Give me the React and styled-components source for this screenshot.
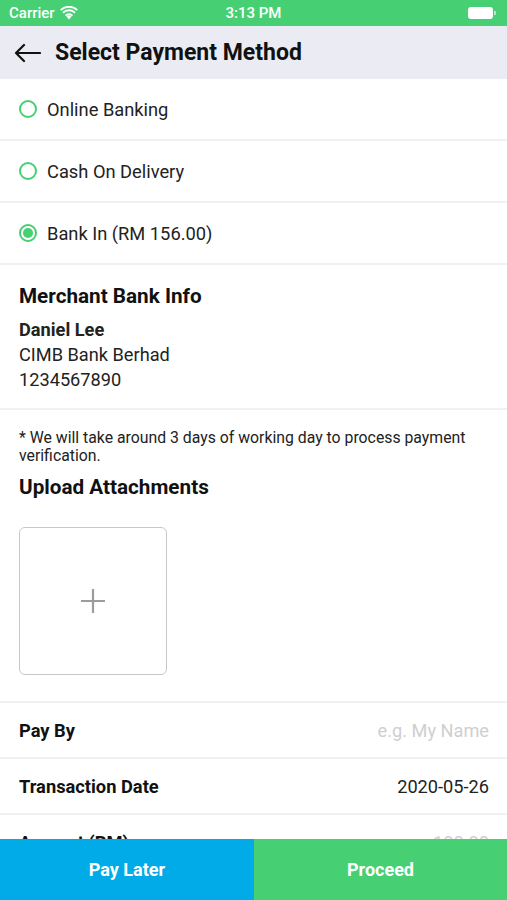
import React, { useState } from 'react'
import styled, { createGlobalStyle } from 'styled-components'

const GlobalStyle = createGlobalStyle`
  html, body {
    margin: 0;
    padding: 0;
    background: #fff;
    font-family: Roboto, "Liberation Sans", Arial, sans-serif;
  }
  * { box-sizing: border-box; }
`

const Screen = styled.div`
  height: 100vh;
  display: flex;
  flex-direction: column;
  overflow: hidden;
`

const StatusBar = styled.div`
  height: 26px;
  background: #47cf73;
  color: #fff;
  display: grid;
  grid-template-columns: 1fr auto 1fr;
  align-items: center;
  padding: 0 9px;
  font-size: 15px;
  font-weight: 500;
`

const Carrier = styled.div`
  display: flex;
  align-items: center;
  gap: 5px;
`

const Battery = styled.div`
  justify-self: end;
  display: flex;
  align-items: center;
  gap: 1px;
  margin-right: 2px;

  span {
    display: block;
    width: 25px;
    height: 12px;
    border-radius: 3px;
    background: #fff;
  }
  i {
    display: block;
    width: 2px;
    height: 4px;
    border-radius: 0 1px 1px 0;
    background: rgba(255, 255, 255, 0.6);
  }
`

const Header = styled.div`
  height: 53px;
  background: #ebecf3;
  display: flex;
  align-items: center;
  padding-left: 14px;
  gap: 14px;
`

const Title = styled.h1`
  margin: 0;
  font-size: 23px;
  font-weight: 700;
  color: #111;
`

const Scroll = styled.div`
  flex: 1;
  overflow: hidden;
`

const OptionRow = styled.div`
  height: 62px;
  display: flex;
  align-items: center;
  gap: 10px;
  padding-left: 19px;
  border-bottom: 2px solid #f1f1f1;
  font-size: 18.3px;
  color: #222;
  cursor: pointer;
`

const Radio = styled.span`
  width: 18px;
  height: 18px;
  border-radius: 50%;
  border: 2px solid #47cf73;
  display: flex;
  align-items: center;
  justify-content: center;

  &::after {
    content: '';
    width: 10px;
    height: 10px;
    border-radius: 50%;
    background: ${({ checked }) => (checked ? '#47cf73' : 'transparent')};
  }
`

const Section = styled.div`
  padding: ${({ pad }) => pad || '19px 19px 16px'};
  border-bottom: 2px solid #f1f1f1;
`

const SectionTitle = styled.h2`
  margin: 0 0 9px;
  font-size: 20.7px;
  line-height: 24px;
  font-weight: 700;
  color: #111;
`

const InfoLine = styled.div`
  font-size: 18.2px;
  line-height: 25px;
  color: #222;
  font-weight: ${({ bold }) => (bold ? 700 : 400)};
`

const Note = styled.p`
  margin: 0 0 10px;
  font-size: 15.8px;
  line-height: 18px;
  color: #222;
`

const UploadBox = styled.div`
  margin-top: 28px;
  width: 148px;
  height: 148px;
  border: 1.5px solid #c8c8c8;
  border-radius: 6px;
  display: flex;
  align-items: center;
  justify-content: center;
`

const FieldRow = styled.div`
  height: 56px;
  display: flex;
  align-items: center;
  justify-content: space-between;
  padding: 0 18px 0 19px;
  border-bottom: 2px solid #f1f1f1;
`

const FieldLabel = styled.span`
  font-size: 18.3px;
  font-weight: 700;
  color: #111;
`

const FieldValue = styled.span`
  font-size: 18.2px;
  color: ${({ placeholder }) => (placeholder ? '#cfcfcf' : '#222')};
`

const Footer = styled.div`
  height: 61px;
  display: grid;
  grid-template-columns: 254px 1fr;
`

const FooterButton = styled.button`
  border: none;
  margin: 0;
  background: ${({ primary }) => (primary ? '#47cf73' : '#00abe7')};
  color: #fff;
  font-family: inherit;
  font-size: 18px;
  font-weight: 700;
  cursor: pointer;
`

const options = ['Online Banking', 'Cash On Delivery', 'Bank In (RM 156.00)']

const fields = [
  { label: 'Pay By', value: 'e.g. My Name', placeholder: true },
  { label: 'Transaction Date', value: '2020-05-26' },
  { label: 'Amount (RM)', value: '100.00', placeholder: true },
]

const WifiIcon = () => (
  <svg width="18" height="14" viewBox="0 0 18 14" fill="#fff">
    <path d="M9 13.5l2.6-2.9a3.6 3.6 0 0 0-5.2 0z" />
    <path d="M4.9 8.9l1.3 1.4a4 4 0 0 1 5.6 0l1.3-1.4a5.9 5.9 0 0 0-8.2 0z" />
    <path d="M2.3 6.1l1.3 1.4a7.6 7.6 0 0 1 10.8 0l1.3-1.4a9.5 9.5 0 0 0-13.4 0z" />
    <path d="M0 3.4l1.3 1.4a11.1 11.1 0 0 1 15.4 0L18 3.4a13 13 0 0 0-18 0z" />
  </svg>
)

const BackArrow = () => (
  <svg width="27" height="20" viewBox="0 0 27 20" fill="none" stroke="#111" strokeWidth="2.2" strokeLinecap="round" strokeLinejoin="round">
    <path d="M26 10H2M10 2L2 10l8 8" />
  </svg>
)

const PlusIcon = () => (
  <svg width="26" height="26" viewBox="0 0 26 26" stroke="#9c9c9c" strokeWidth="2.2">
    <path d="M13 1v24M1 13h24" />
  </svg>
)

export default function App() {
  const [selected, setSelected] = useState(2)

  return (
    <Screen>
      <GlobalStyle />
      <StatusBar>
        <Carrier>Carrier <WifiIcon /></Carrier>
        <span>3:13 PM</span>
        <Battery><span /><i /></Battery>
      </StatusBar>
      <Header>
        <BackArrow />
        <Title>Select Payment Method</Title>
      </Header>
      <Scroll>
        {options.map((opt, ix) => (
          <OptionRow key={opt} onClick={() => setSelected(ix)}>
            <Radio checked={selected === ix} />
            {opt}
          </OptionRow>
        ))}
        <Section>
          <SectionTitle>Merchant Bank Info</SectionTitle>
          <InfoLine bold>Daniel Lee</InfoLine>
          <InfoLine>CIMB Bank Berhad</InfoLine>
          <InfoLine>1234567890</InfoLine>
        </Section>
        <Section pad="19px 19px 26px">
          <Note>* We will take around 3 days of working day to process payment verification.</Note>
          <SectionTitle>Upload Attachments</SectionTitle>
          <UploadBox>
            <PlusIcon />
          </UploadBox>
        </Section>
        {fields.map(f => (
          <FieldRow key={f.label}>
            <FieldLabel>{f.label}</FieldLabel>
            <FieldValue placeholder={f.placeholder}>{f.value}</FieldValue>
          </FieldRow>
        ))}
      </Scroll>
      <Footer>
        <FooterButton>Pay Later</FooterButton>
        <FooterButton primary>Proceed</FooterButton>
      </Footer>
    </Screen>
  )
}
